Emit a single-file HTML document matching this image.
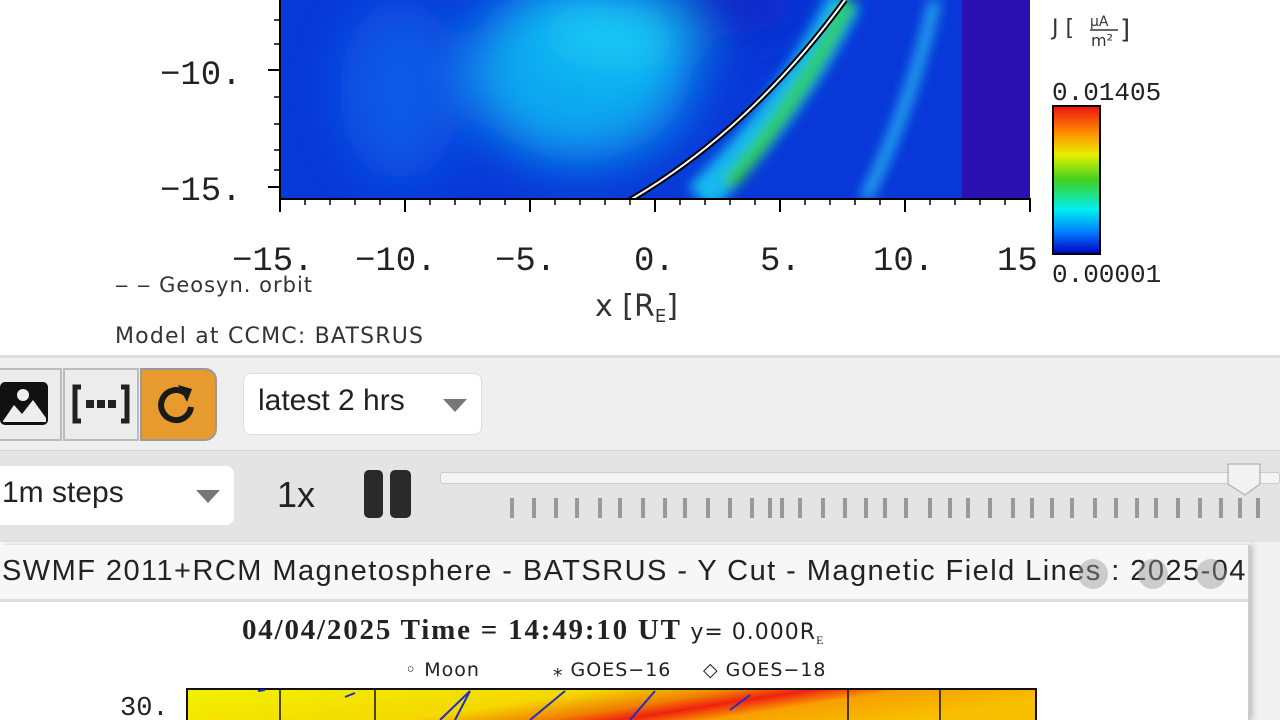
<!DOCTYPE html>
<html><head><meta charset="utf-8"><style>
*{margin:0;padding:0;box-sizing:border-box}
body{width:1280px;height:720px;overflow:hidden;background:#fff;font-family:"Liberation Sans",sans-serif;position:relative}
.abs{position:absolute}
</style></head><body>
<svg class="abs" style="left:0;top:0" width="1280" height="356" viewBox="0 0 1280 356">
<defs>
<filter id="b1" x="-30%" y="-30%" width="160%" height="160%"><feGaussianBlur stdDeviation="25"/></filter>
<filter id="b2"><feGaussianBlur stdDeviation="6"/></filter>
<linearGradient id="cb" x1="0" y1="0" x2="0" y2="1">
<stop offset="0" stop-color="#f01010"/><stop offset="0.2" stop-color="#ff9a00"/><stop offset="0.33" stop-color="#e6f000"/><stop offset="0.5" stop-color="#40d020"/><stop offset="0.7" stop-color="#00f0f0"/><stop offset="0.85" stop-color="#0080ff"/><stop offset="1" stop-color="#0000c0"/></linearGradient>
<clipPath id="pc"><rect x="280" y="0" width="750" height="199"/></clipPath>
</defs>
<g clip-path="url(#pc)">
<rect x="280" y="0" width="750" height="199" fill="#0838d8"/>
<g filter="url(#b1)">
<ellipse cx="580" cy="70" rx="110" ry="90" fill="#10a8f0"/>
<ellipse cx="620" cy="30" rx="80" ry="40" fill="#18c8f4"/>
<ellipse cx="730" cy="0" rx="70" ry="35" fill="#0828c8"/>
<ellipse cx="400" cy="90" rx="60" ry="90" fill="#0c5ae6"/>
</g>
<g filter="url(#b2)">
<path d="M700 199 Q790 110 845 0" stroke="#18b8f0" stroke-width="34" fill="none"/>
<path d="M728 185 Q800 100 850 0" stroke="#30d030" stroke-width="14" fill="none"/>
<path d="M865 199 Q910 110 935 0" stroke="#20a8f0" stroke-width="12" fill="none"/>
</g>
<rect x="962" y="0" width="70" height="199" fill="#2a10b0"/>
<path d="M630 200 Q750 130 845 0" stroke="#000" stroke-width="6" fill="none"/>
<path d="M630 200 Q750 130 845 0" stroke="#fff" stroke-width="2" fill="none"/>
</g>
<g stroke="#000" stroke-width="2">
<line x1="280" y1="0" x2="280" y2="200"/><line x1="279" y1="199" x2="1031" y2="199"/>
<line x1="280" y1="212" x2="280" y2="199"/><line x1="405" y1="212" x2="405" y2="199"/><line x1="530" y1="212" x2="530" y2="199"/><line x1="655" y1="212" x2="655" y2="199"/><line x1="780" y1="212" x2="780" y2="199"/><line x1="905" y1="212" x2="905" y2="199"/><line x1="1030" y1="212" x2="1030" y2="199"/>
<line x1="268" y1="70" x2="280" y2="70"/><line x1="268" y1="187" x2="280" y2="187"/>
</g>
<g stroke="#000" stroke-width="1.5">
<line x1="305" y1="205" x2="305" y2="199"/><line x1="330" y1="205" x2="330" y2="199"/><line x1="355" y1="205" x2="355" y2="199"/><line x1="380" y1="205" x2="380" y2="199"/><line x1="430" y1="205" x2="430" y2="199"/><line x1="455" y1="205" x2="455" y2="199"/><line x1="480" y1="205" x2="480" y2="199"/><line x1="505" y1="205" x2="505" y2="199"/><line x1="555" y1="205" x2="555" y2="199"/><line x1="580" y1="205" x2="580" y2="199"/><line x1="605" y1="205" x2="605" y2="199"/><line x1="630" y1="205" x2="630" y2="199"/><line x1="680" y1="205" x2="680" y2="199"/><line x1="705" y1="205" x2="705" y2="199"/><line x1="730" y1="205" x2="730" y2="199"/><line x1="755" y1="205" x2="755" y2="199"/><line x1="805" y1="205" x2="805" y2="199"/><line x1="830" y1="205" x2="830" y2="199"/><line x1="855" y1="205" x2="855" y2="199"/><line x1="880" y1="205" x2="880" y2="199"/><line x1="930" y1="205" x2="930" y2="199"/><line x1="955" y1="205" x2="955" y2="199"/><line x1="980" y1="205" x2="980" y2="199"/><line x1="1005" y1="205" x2="1005" y2="199"/>
<line x1="274" y1="20" x2="280" y2="20"/><line x1="274" y1="44" x2="280" y2="44"/><line x1="274" y1="97" x2="280" y2="97"/><line x1="274" y1="124" x2="280" y2="124"/><line x1="274" y1="150" x2="280" y2="150"/><line x1="274" y1="170" x2="280" y2="170"/>
</g>
<g font-family="Liberation Mono, DejaVu Sans Mono, monospace" fill="#222" font-size="34">
<text x="160" y="84">−10.</text><text x="160" y="200">−15.</text>
<text x="232" y="270">−15.</text><text x="355" y="270">−10.</text><text x="495" y="270">−5.</text><text x="634" y="270">0.</text><text x="760" y="270">5.</text><text x="873" y="270">10.</text><text x="997" y="270">15</text>
</g>
<text x="595" y="316" font-family="DejaVu Sans, sans-serif" font-size="30" fill="#333">x [R<tspan font-size="18" dy="6">E</tspan><tspan dy="-6">]</tspan></text>
<text x="115" y="292" font-family="DejaVu Sans, sans-serif" font-size="21" fill="#333" letter-spacing="1">‒ ‒  Geosyn. orbit</text>
<text x="115" y="343" font-family="DejaVu Sans, sans-serif" font-size="22" fill="#333" letter-spacing="1.2">Model at CCMC: BATSRUS</text>
<text x="1052" y="35" font-family="DejaVu Sans, sans-serif" font-size="22" fill="#333">J [</text>
<text x="1090" y="26" font-family="DejaVu Sans, sans-serif" font-size="14" fill="#333">μA</text>
<line x1="1090" y1="30" x2="1118" y2="30" stroke="#333" stroke-width="1.5"/>
<text x="1091" y="46" font-family="DejaVu Sans, sans-serif" font-size="16" fill="#333">m²</text>
<text x="1120" y="38" font-family="DejaVu Sans, sans-serif" font-size="26" fill="#333">]</text>
<text x="1052" y="100" font-family="Liberation Mono, monospace" font-size="26" fill="#222">0.01405</text>
<rect x="1053" y="106" width="47" height="148" fill="url(#cb)" stroke="#000" stroke-width="2"/>
<text x="1052" y="282" font-family="Liberation Mono, monospace" font-size="26" fill="#222">0.00001</text>
</svg>

<div class="abs" style="left:0;top:355px;width:1280px;height:95px;background:#efefef;border-top:3px solid #ddd"></div>
<div class="abs" style="left:0;top:450px;width:1280px;height:92px;background:#e4e4e4;border-top:1px solid #d6d6d6"></div>

<div class="abs" style="left:-10px;top:368px;width:72px;height:73px;background:#ececec;border:2px solid #bbb;border-radius:10px 0 0 10px"></div>
<svg class="abs" style="left:0;top:382px" width="50" height="44" viewBox="0 0 50 44"><rect x="0" y="0" width="48" height="43" rx="5" fill="#111"/><circle cx="23" cy="13" r="6" fill="#eee"/><path d="M3 39 L14 23 L22 32 L33 18 L46 36 L46 40 L3 40 Z" fill="#eee"/></svg>
<div class="abs" style="left:63px;top:368px;width:76px;height:73px;background:#ececec;border:2px solid #bbb"></div>
<svg class="abs" style="left:72px;top:384px" width="58" height="40" viewBox="0 0 58 40"><path d="M9 3 H3 V37 H9" stroke="#222" stroke-width="5" fill="none"/><path d="M49 3 H55 V37 H49" stroke="#222" stroke-width="5" fill="none"/><rect x="14" y="16" width="8" height="8" fill="#222"/><rect x="25" y="16" width="8" height="8" fill="#222"/><rect x="36" y="16" width="8" height="8" fill="#222"/></svg>
<div class="abs" style="left:140px;top:368px;width:77px;height:73px;background:#e79a2e;border:2px solid #999;border-radius:0 12px 12px 0"></div>
<svg class="abs" style="left:154px;top:383px" width="46" height="46" viewBox="0 0 46 46"><path d="M31 10 A15 15 0 1 0 37 24" stroke="#1a1a1a" stroke-width="6" fill="none"/><path d="M24 2 L38 6 L33 19 Z" fill="#1a1a1a"/></svg>

<div class="abs" style="left:243px;top:373px;width:239px;height:62px;background:#fff;border:1px solid #ddd;border-radius:8px"></div>
<div class="abs" style="left:258px;top:384px;font:30px 'Liberation Sans',sans-serif;color:#222">latest 2 hrs</div>
<div class="abs" style="left:443px;top:399px;width:0;height:0;border-left:12px solid transparent;border-right:12px solid transparent;border-top:13px solid #777"></div>

<div class="abs" style="left:-10px;top:466px;width:244px;height:59px;background:#fff;border-radius:8px"></div>
<div class="abs" style="left:2px;top:476px;font:30px 'Liberation Sans',sans-serif;color:#222">1m steps</div>
<div class="abs" style="left:196px;top:490px;width:0;height:0;border-left:12px solid transparent;border-right:12px solid transparent;border-top:13px solid #777"></div>
<div class="abs" style="left:277px;top:474px;font:36px 'Liberation Sans',sans-serif;color:#222">1x</div>
<div class="abs" style="left:364px;top:470px;width:19px;height:48px;background:#2a2a2a;border-radius:5px"></div>
<div class="abs" style="left:390px;top:470px;width:21px;height:48px;background:#2a2a2a;border-radius:5px"></div>
<div class="abs" style="left:440px;top:472px;width:840px;height:12px;background:#f4f4f4;border:1px solid #ccc;border-radius:3px"></div>
<svg class="abs" style="left:440px;top:462px" width="840" height="60" viewBox="0 0 840 60">
<g stroke="#999" stroke-width="4">
<line x1="72" y1="36" x2="72" y2="56"/><line x1="94" y1="36" x2="94" y2="56"/><line x1="116" y1="36" x2="116" y2="56"/><line x1="137" y1="36" x2="137" y2="56"/><line x1="160" y1="36" x2="160" y2="56"/><line x1="180" y1="36" x2="180" y2="56"/><line x1="203" y1="36" x2="203" y2="56"/><line x1="225" y1="36" x2="225" y2="56"/><line x1="245" y1="36" x2="245" y2="56"/><line x1="268" y1="36" x2="268" y2="56"/><line x1="290" y1="36" x2="290" y2="56"/><line x1="312" y1="36" x2="312" y2="56"/><line x1="330" y1="36" x2="330" y2="56"/><line x1="342" y1="36" x2="342" y2="56"/><line x1="360" y1="36" x2="360" y2="56"/><line x1="383" y1="36" x2="383" y2="56"/><line x1="405" y1="36" x2="405" y2="56"/><line x1="426" y1="36" x2="426" y2="56"/><line x1="445" y1="36" x2="445" y2="56"/><line x1="466" y1="36" x2="466" y2="56"/><line x1="490" y1="36" x2="490" y2="56"/><line x1="510" y1="36" x2="510" y2="56"/><line x1="528" y1="36" x2="528" y2="56"/><line x1="550" y1="36" x2="550" y2="56"/><line x1="573" y1="36" x2="573" y2="56"/><line x1="592" y1="36" x2="592" y2="56"/><line x1="612" y1="36" x2="612" y2="56"/><line x1="632" y1="36" x2="632" y2="56"/><line x1="655" y1="36" x2="655" y2="56"/><line x1="676" y1="36" x2="676" y2="56"/><line x1="697" y1="36" x2="697" y2="56"/><line x1="716" y1="36" x2="716" y2="56"/><line x1="738" y1="36" x2="738" y2="56"/><line x1="760" y1="36" x2="760" y2="56"/><line x1="781" y1="36" x2="781" y2="56"/><line x1="800" y1="36" x2="800" y2="56"/><line x1="818" y1="36" x2="818" y2="56"/>
</g>
<path d="M788 2 L820 2 L820 22 L805 33 L788 22 Z" fill="#f2f2f2" stroke="#bbb" stroke-width="1.5"/>
</svg>

<div class="abs" style="left:1250px;top:542px;width:30px;height:178px;background:#f1f1f1"></div>
<div class="abs" style="left:0;top:545px;width:1250px;height:175px;background:#fff;border-right:2px solid #ccc;box-shadow:2px 0 6px rgba(0,0,0,.25)"></div>
<div class="abs" style="left:0;top:545px;width:1248px;height:57px;background:#f7f7f7;border-bottom:3px solid #ddd;overflow:hidden;white-space:nowrap">
<div style="position:absolute;left:2px;top:10px;font:29px 'Liberation Sans',sans-serif;color:#222;letter-spacing:1.45px">SWMF 2011+RCM Magnetosphere - BATSRUS - Y Cut - Magnetic Field Lines : 2025-04</div>
<div style="position:absolute;left:1078px;top:14px;width:30px;height:30px;border-radius:50%;background:rgba(150,150,150,.45)"></div>
<div style="position:absolute;left:1138px;top:14px;width:30px;height:30px;border-radius:50%;background:rgba(150,150,150,.45)"></div>
<div style="position:absolute;left:1196px;top:14px;width:30px;height:30px;border-radius:50%;background:rgba(150,150,150,.45)"></div>
</div>
<svg class="abs" style="left:0;top:605px" width="1245" height="115" viewBox="0 0 1245 115">
<defs><linearGradient id="yg" x1="0" y1="0" x2="1" y2="0.3"><stop offset="0" stop-color="#f2f200"/><stop offset="0.45" stop-color="#f5d800"/><stop offset="0.6" stop-color="#f08000"/><stop offset="0.68" stop-color="#f02010"/><stop offset="0.78" stop-color="#f8a000"/><stop offset="1" stop-color="#f8c000"/></linearGradient></defs>
<text x="242" y="34" font-family="Liberation Serif, serif" font-weight="bold" font-size="29" fill="#222" letter-spacing="1.8">04/04/2025 Time = 14:49:10 UT <tspan font-weight="normal" font-family="DejaVu Sans, sans-serif" font-size="22" letter-spacing="1">y= 0.000R</tspan><tspan font-size="12" dy="5" font-weight="normal">E</tspan></text>
<g font-family="DejaVu Sans, sans-serif" font-size="19" fill="#222" letter-spacing="1">
<text x="405" y="71">◦ Moon</text><text x="553" y="71">⁎ GOES−16</text><text x="703" y="71">◇ GOES−18</text></g>
<text x="120" y="110" font-family="Liberation Mono, monospace" font-size="27" fill="#222">30.</text>
<rect x="187" y="84" width="849" height="40" fill="url(#yg)" stroke="#111" stroke-width="2"/>
<g stroke="#111" stroke-width="1.5"><line x1="280" y1="84" x2="280" y2="115"/><line x1="375" y1="84" x2="375" y2="115"/><line x1="848" y1="84" x2="848" y2="115"/><line x1="940" y1="84" x2="940" y2="115"/></g>
<g stroke="#2030c0" stroke-width="2" fill="none"><path d="M440 115 L470 86"/><path d="M455 115 L470 86"/><path d="M530 115 L565 86"/><path d="M630 115 L655 86"/><path d="M730 105 L750 90"/><path d="M258 86 L265 85"/><path d="M345 92 L355 88"/></g>
</svg>
</body></html>
